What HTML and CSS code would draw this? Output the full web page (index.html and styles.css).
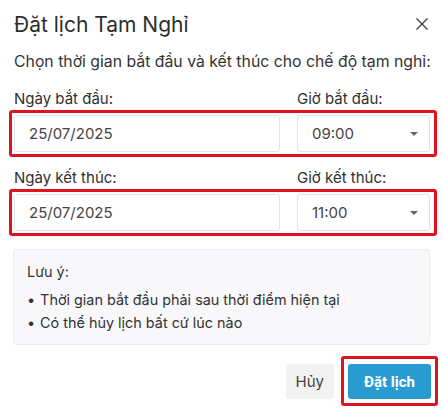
FILE: index.html
```html
<!DOCTYPE html>
<html lang="vi">
<head>
<meta charset="utf-8">
<title>Đặt lịch Tạm Nghỉ</title>
<link rel="stylesheet" href="styles.css">
</head>
<body>
<div class="dialog">
  <header class="dialog-head">
    <h1 class="dialog-title">Đặt lịch Tạm Nghỉ</h1>
    <button class="close" aria-label="Đóng">
      <svg width="14" height="14" viewBox="0 0 14 14"><path d="M1.5 1.5 L12.5 12.5 M12.5 1.5 L1.5 12.5" stroke="#444" stroke-width="1.4" fill="none"/></svg>
    </button>
  </header>
  <p class="intro">Chọn thời gian bắt đầu và kết thúc cho chế độ tạm nghỉ:</p>

  <div class="labels">
    <span>Ngày bắt đầu:</span>
    <span>Giờ bắt đầu:</span>
  </div>
  <div class="field-row mark">
    <div class="input">25/07/2025</div>
    <div class="input select">09:00<span class="caret"></span></div>
  </div>

  <div class="labels">
    <span>Ngày kết thúc:</span>
    <span>Giờ kết thúc:</span>
  </div>
  <div class="field-row mark">
    <div class="input">25/07/2025</div>
    <div class="input select">11:00<span class="caret"></span></div>
  </div>

  <div class="note">
    <div class="note-title">Lưu ý:</div>
    <ul>
      <li>Thời gian bắt đầu phải sau thời điểm hiện tại</li>
      <li>Có thể hủy lịch bất cứ lúc nào</li>
    </ul>
  </div>

  <footer class="actions">
    <button class="btn btn-cancel">Hủy</button>
    <div class="mark mark-btn"><button class="btn btn-primary">Đặt lịch</button></div>
  </footer>
</div>
</body>
</html>
```

FILE: styles.css
```css
* { box-sizing: border-box; }

body {
  margin: 0;
  background: #fff;
  font-family: Inter, "Noto Sans", sans-serif;
  color: #333;
}

.dialog {
  width: 443px;
  padding: 9px 5px 0 9px;
}

.dialog-head {
  display: flex;
  align-items: center;
  justify-content: space-between;
  padding: 0 9px 0 5px;
  height: 30px;
}

.dialog-title {
  margin: 0;
  font-size: 21px;
  font-weight: 400;
  color: #2d2d2d;
}

.close {
  border: 0;
  background: none;
  padding: 0;
  display: flex;
}

.intro {
  margin: 13px 0 0 5px;
  font-size: 15.8px;
  line-height: 20px;
  color: #333;
}

.labels {
  display: grid;
  grid-template-columns: 283px 1fr;
  padding-left: 5px;
  margin-top: 18px;
  font-size: 15px;
  line-height: 18px;
  color: #2f2f2f;
}

.labels + .field-row { margin-top: 2px; }
.field-row + .labels { margin-top: 12px; }

.mark {
  border: 3px solid #e0121f;
  border-radius: 3px;
}

.field-row {
  display: grid;
  grid-template-columns: 266px 133px;
  column-gap: 17px;
  padding: 2px 4px 2px 2px;
  width: 428px;
}

.input {
  height: 37px;
  border: 1px solid #e4e4e4;
  border-radius: 3px;
  padding: 0 14px;
  display: flex;
  align-items: center;
  font-size: 15px;
  color: #444;
}

.select {
  justify-content: space-between;
  padding-right: 11px;
}

.caret {
  width: 0;
  height: 0;
  border-left: 4px solid transparent;
  border-right: 4px solid transparent;
  border-top: 4px solid #666;
}

.note {
  margin: 13px 8px 0 4px;
  background: #f8f8fa;
  border: 1px solid #ececf0;
  border-radius: 3px;
  padding: 10px 13px 10px;
  font-size: 14.4px;
  line-height: 23px;
  color: #333;
}

.note-title { margin-bottom: 5px; }

.note ul {
  margin: 0;
  padding: 0;
  list-style: none;
}

.note li::before {
  content: "•";
  margin-right: 5px;
}

.actions {
  display: flex;
  justify-content: flex-end;
  align-items: center;
  gap: 7px;
  margin-top: 11px;
}

.btn {
  border: 0;
  border-radius: 3px;
  font-size: 15px;
  font-family: inherit;
  height: 35px;
}

.btn-cancel {
  background: #f2f2f2;
  color: #444;
  padding: 0 10px;
  margin-top: 1px;
}

.mark-btn {
  padding: 5px 4px 4px 4px;
}

.btn-primary {
  background: #2a9bd0;
  color: #fff;
  font-family: Roboto, sans-serif;
  font-weight: 700;
  padding: 0 16px;
}
```
